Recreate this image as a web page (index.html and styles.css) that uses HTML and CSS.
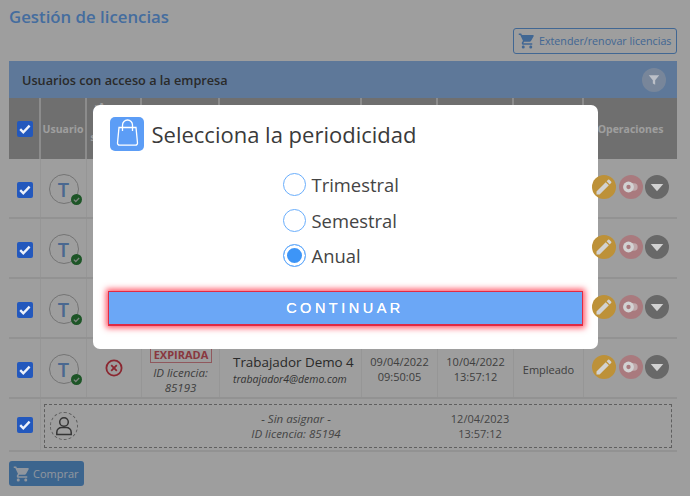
FILE: index.html
```html
<!DOCTYPE html>
<html lang="es">
<head>
<meta charset="utf-8">
<title>Gestión de licencias</title>
<link rel="stylesheet" href="styles.css">
</head>
<body>
<svg class="defs" width="0" height="0" aria-hidden="true">
  <symbol id="cart" viewBox="0 0 24 24"><path d="M17,18C15.89,18 15,18.89 15,20A2,2 0 0,0 17,22A2,2 0 0,0 19,20C19,18.89 18.1,18 17,18M1,2V4H3L6.6,11.59L5.24,14.04C5.09,14.32 5,14.65 5,15A2,2 0 0,0 7,17H19V15H7.42A0.25,0.25 0 0,1 7.17,14.75C7.17,14.7 7.18,14.66 7.2,14.63L8.1,13H15.55C16.3,13 16.96,12.58 17.3,11.97L20.88,5.5C20.95,5.34 21,5.17 21,5A1,1 0 0,0 20,4H5.21L4.27,2M7,18C5.89,18 5,18.89 5,20A2,2 0 0,0 7,22A2,2 0 0,0 9,20C9,18.89 8.1,18 7,18Z"/></symbol>
  <symbol id="pencil" viewBox="0 0 24 24"><path d="M20.71,7.04C21.1,6.65 21.1,6 20.71,5.63L18.37,3.29C18,2.9 17.35,2.9 16.96,3.29L15.12,5.12L18.87,8.87M3,17.25V21H6.75L17.81,9.93L14.06,6.18L3,17.25Z"/></symbol>
  <symbol id="toggle" viewBox="0 0 24 24"><rect x="9" y="7.5" width="11" height="9" rx="4.5" opacity=".55"/><circle cx="9" cy="12" r="6.5"/><circle cx="9" cy="12" r="2.6" fill="#a97a7e"/></symbol>
  <symbol id="caret" viewBox="0 0 24 24"><path d="M4.5 8.5h15L12 17z"/></symbol>
  <symbol id="check" viewBox="0 0 16 16"><path d="M3.2 8.2l3.1 3.1 6.3-6.6" fill="none" stroke="currentColor" stroke-width="2.4"/></symbol>
  <symbol id="okbadge" viewBox="0 0 12 12"><circle cx="6" cy="6" r="6" fill="#2f8a3f"/><path d="M3.1 6.1l2.1 2.1 3.7-3.9" fill="none" stroke="#c9d8cb" stroke-width="1.4"/></symbol>
</svg>

<main class="page">
  <h1 class="title">Gestión de licencias</h1>
  <div class="toolbar">
    <button class="btn-outline" type="button"><svg class="ico-cart"><use href="#cart"/></svg>Extender/renovar licencias</button>
  </div>

  <section class="panel">
    <header class="panel-head">
      <span>Usuarios con acceso a la empresa</span>
      <span class="filter"><svg viewBox="0 0 24 24" width="14" height="14"><path d="M3 4h18l-7 8.500V20l-4-2v-5.500z"/></svg></span>
    </header>

    <div class="row head">
      <div class="cell"><span class="chk"><svg><use href="#check"/></svg></span></div>
      <div class="cell">Usuario</div>
      <div class="cell narrow">¿Acceso a sistema?</div>
      <div class="cell"></div>
      <div class="cell"></div>
      <div class="cell"></div>
      <div class="cell"></div>
      <div class="cell"></div>
      <div class="cell">Operaciones</div>
    </div>

    <div class="row body">
      <div class="cell"><span class="chk"><svg><use href="#check"/></svg></span></div>
      <div class="cell"><span class="avatar">T<svg class="badge"><use href="#okbadge"/></svg></span></div>
      <div class="cell"></div><div class="cell"></div><div class="cell"></div><div class="cell"></div><div class="cell"></div><div class="cell"></div>
      <div class="cell ops">
        <span class="op edit"><svg><use href="#pencil"/></svg></span>
        <span class="op tog"><svg><use href="#toggle"/></svg></span>
        <span class="op more"><svg><use href="#caret"/></svg></span>
      </div>
    </div>

    <div class="row body">
      <div class="cell"><span class="chk"><svg><use href="#check"/></svg></span></div>
      <div class="cell"><span class="avatar">T<svg class="badge"><use href="#okbadge"/></svg></span></div>
      <div class="cell"></div><div class="cell"></div><div class="cell"></div><div class="cell"></div><div class="cell"></div><div class="cell"></div>
      <div class="cell ops">
        <span class="op edit"><svg><use href="#pencil"/></svg></span>
        <span class="op tog"><svg><use href="#toggle"/></svg></span>
        <span class="op more"><svg><use href="#caret"/></svg></span>
      </div>
    </div>

    <div class="row body">
      <div class="cell"><span class="chk"><svg><use href="#check"/></svg></span></div>
      <div class="cell"><span class="avatar">T<svg class="badge"><use href="#okbadge"/></svg></span></div>
      <div class="cell"></div><div class="cell"></div><div class="cell"></div><div class="cell"></div><div class="cell"></div><div class="cell"></div>
      <div class="cell ops">
        <span class="op edit"><svg><use href="#pencil"/></svg></span>
        <span class="op tog"><svg><use href="#toggle"/></svg></span>
        <span class="op more"><svg><use href="#caret"/></svg></span>
      </div>
    </div>

    <div class="row body">
      <div class="cell"><span class="chk"><svg><use href="#check"/></svg></span></div>
      <div class="cell"><span class="avatar">T<svg class="badge"><use href="#okbadge"/></svg></span></div>
      <div class="cell"><svg class="denied" viewBox="0 0 20 20"><circle cx="10" cy="10" r="7.6"/><path d="M7.200 7.200l5.600 5.600M12.800 7.200l-5.600 5.600"/></svg></div>
      <div class="cell lic">
        <span class="stamp">EXPIRADA</span>
        <em>ID licencia:<br>85193</em>
      </div>
      <div class="cell user">
        <span class="name">Trabajador Demo 4</span>
        <em class="mail">trabajador4@demo.com</em>
      </div>
      <div class="cell date">09/04/2022<br>09:50:05</div>
      <div class="cell date">10/04/2022<br>13:57:12</div>
      <div class="cell date">Empleado</div>
      <div class="cell ops">
        <span class="op edit"><svg><use href="#pencil"/></svg></span>
        <span class="op tog"><svg><use href="#toggle"/></svg></span>
        <span class="op more"><svg><use href="#caret"/></svg></span>
      </div>
    </div>

    <div class="row last">
      <div class="cell"><span class="chk"><svg><use href="#check"/></svg></span></div>
      <div class="slot">
        <span class="ghost"><svg viewBox="0 0 24 24"><circle cx="12" cy="8" r="4.300"/><path d="M4.800 20.500v-2.300c0-2.800 2.400-4.700 4.800-4.700h4.800c2.400 0 4.800 1.900 4.800 4.700v2.300z"/></svg></span>
        <em class="slot-text">- Sin asignar -<br>ID licencia: 85194</em>
        <span class="slot-date">12/04/2023<br>13:57:12</span>
      </div>
    </div>
  </section>

  <button class="btn-buy" type="button"><svg class="ico-cart"><use href="#cart"/></svg>Comprar</button>
</main>

<div class="overlay">
  <div class="modal">
    <div class="modal-head">
      <span class="bag"><svg viewBox="0 0 34 34"><path d="M9 10.500h17l1.500 15.500a2 2 0 0 1-2 2.200H9.500a2 2 0 0 1-2-2.200z"/><path d="M12.500 14V8a5 5 0 0 1 10 0v6"/></svg></span>
      <h2>Selecciona la periodicidad</h2>
    </div>
    <div class="options">
      <label class="opt"><span class="radio"></span>Trimestral</label>
      <label class="opt"><span class="radio"></span>Semestral</label>
      <label class="opt"><span class="radio on"></span>Anual</label>
    </div>
    <button class="continue" type="button">CONTINUAR</button>
  </div>
</div>
</body>
</html>
```
FILE: styles.css
```css
* { box-sizing: border-box; }
html, body { margin: 0; height: 100%; }
body {
  background: #fff;
  font-family: "Open Sans", "Noto Sans", sans-serif;
  color: #666;
  overflow: hidden;
}
.defs { display: block; height: 0; }
.page { padding: 6px 13px 0 9px; }
.title {
  margin: 0;
  height: 22px;
  line-height: 22px;
  font-size: 16.800px;
  font-weight: 600;
  color: #6fb0ff;
}
.toolbar { display: flex; justify-content: flex-end; height: 26px; margin-bottom: 7px; }
.ico-cart { width: 18px; height: 18px; fill: currentColor; flex: none; }
button { font-family: inherit; cursor: pointer; }
.btn-outline {
  display: flex;
  align-items: center;
  gap: 3px;
  width: 164px;
  height: 26px;
  padding: 0 0 0 4px;
  background: transparent;
  border: 1px solid #6aa6ee;
  border-radius: 3px;
  font-size: 10.700px;
  color: #6aa6ee;
  white-space: nowrap;
}
.panel-head {
  display: flex;
  align-items: center;
  justify-content: space-between;
  height: 37px;
  padding: 0 11px 0 13px;
  background: #98c2f7;
  font-size: 12.700px;
  font-weight: 600;
  color: #444;
}
.filter {
  display: flex;
  align-items: center;
  justify-content: center;
  width: 24px;
  height: 24px;
  border-radius: 50%;
  background: #c2d9f8;
}
.filter svg { position: relative; z-index: 5; fill: #bcc0c8; }
.row {
  display: grid;
  grid-template-columns: 32px 46px 55px 78px 142px 76px 76px 70px 93px;
}
.cell {
  display: flex;
  flex-direction: column;
  align-items: center;
  justify-content: center;
  text-align: center;
  border-right: 1px solid #f2f2f2;
}
.cell:last-child { border-right: 0; }
.head { height: 61px; background: #b3b3b3; }
.head .cell {
  color: #fff;
  font-size: 10.500px;
  font-weight: 700;
  border-right: 2px solid #e3e3e3;
}
.head .cell:last-child { border-right: 0; }
.head .narrow { justify-content: flex-start; padding: 2px 4px 0; line-height: 15px; }
.body { height: 60px; border-bottom: 2px solid #ececec; }
.last { height: 53px; border-bottom: 2px solid #ececec; grid-template-columns: 32px 1fr; }
.chk {
  position: relative;
  z-index: 5;
  display: block;
  width: 16px;
  height: 16px;
  margin-left: 1px;
  background: #2358bd;
  border-radius: 2px;
  color: #eef2fb;
}
.body .chk { margin-top: 3px; }
.chk svg { display: block; width: 16px; height: 16px; }
.avatar {
  position: relative;
  display: flex;
  align-items: center;
  justify-content: center;
  width: 30px;
  height: 30px;
  margin-top: 2px;
  border: 1px solid #bcbcbc;
  border-radius: 50%;
  background: #fff;
  font-size: 20px;
  font-weight: 600;
  color: #78a8e8;
}
.badge { position: absolute; right: -4px; bottom: -2px; width: 11px; height: 11px; }
.denied {
  width: 20px;
  height: 20px;
  fill: none;
  stroke: #e0404f;
  stroke-width: 1.800;
}
.ops { flex-direction: row; justify-content: flex-start; gap: 2.500px; padding: 0 0 2px 8px; }
.op {
  position: relative;
  z-index: 5;
  display: flex;
  align-items: center;
  justify-content: center;
  flex: none;
  width: 24px;
  height: 24px;
  border-radius: 50%;
}
.op svg {
  display: block;
  width: 20px;
  height: 20px;
  fill: #d2d2d2;
}
.edit { background: #bd9138; }
.tog { background: #a97a7e; }
.more { background: #686868; }
.lic { font-size: 11.500px; line-height: 15px; padding-top: 4px; }
.stamp {
  display: block;
  margin-left: 1px;
  margin-bottom: 2px;
  padding: 0 3px;
  border: 1px solid #e88f96;
  font-size: 11px;
  font-weight: 700;
  line-height: 15px;
  color: #dd5a66;
}
.user { align-items: flex-start; padding: 3px 0 0 13px; }
.name { font-size: 13.400px; line-height: 19px; color: #444; white-space: nowrap; }
.mail { font-size: 10.500px; line-height: 15px; white-space: nowrap; color: #555; }
.date { font-size: 11px; line-height: 15px; padding-top: 2px; color: #666; }
.slot {
  display: flex;
  align-items: center;
  height: 44px;
  margin: 5px 5px 0 3px;
  padding-left: 5px;
  border: 1px dashed #999;
  font-size: 11px;
  line-height: 15px;
  color: #707070;
  text-align: center;
}
.ghost {
  display: flex;
  align-items: center;
  justify-content: center;
  flex: none;
  width: 28px;
  height: 28px;
  border: 1px dashed #999;
  border-radius: 50%;
}
.ghost svg { width: 24px; height: 24px; fill: none; stroke: #555; stroke-width: 1.500; }
.slot-text { width: 150px; margin-left: 143px; flex: none; font-size: 11.500px; }
.slot-date { width: 90px; margin-left: 64px; flex: none; }
.btn-buy {
  display: flex;
  align-items: center;
  gap: 2px;
  width: 75px;
  height: 25px;
  margin-top: 9px;
  padding: 0 0 0 4px;
  border: 0;
  border-radius: 3px;
  background: #62a3e6;
  color: #e8f2ff;
  font-size: 11px;
}
.overlay {
  position: fixed;
  inset: 0;
  z-index: 4;
  display: flex;
  justify-content: center;
  align-items: flex-start;
  padding-top: 105px;
  background: rgba(0, 0, 0, .38);
}
.modal {
  width: 505px;
  height: 244px;
  padding: 12px 15px 0;
  background: #fff;
  border-radius: 7px;
}
.modal-head { display: flex; align-items: center; gap: 8px; padding-left: 2px; }
.bag {
  display: block;
  width: 34px;
  height: 34px;
  border-radius: 5px;
  background: #5c9df6;
}
.bag svg { display: block; width: 34px; height: 34px; fill: none; stroke: #fff; stroke-width: 1.300; }
.modal-head h2 { margin: 0; font-size: 22px; font-weight: 400; color: #3a3a3a; white-space: nowrap; }
.options {
  display: flex;
  flex-direction: column;
  gap: 12.500px;
  width: 130px;
  margin: 22px 0 0 175px;
}
.opt { display: flex; align-items: center; gap: 6px; height: 23px; font-size: 18.400px; color: #444; }
.radio {
  display: block;
  flex: none;
  width: 23px;
  height: 23px;
  border: 1px solid #6aaefc;
  border-radius: 50%;
  background: #fff;
}
.radio.on { background: #3d95f7; box-shadow: inset 0 0 0 3px #fff; }
.continue {
  display: block;
  width: 475px;
  height: 35px;
  margin-top: 24px;
  background: #6ba7f6;
  border: 1px solid #e02a44;
  border-bottom-width: 2px;
  box-shadow: 0 0 6px 2px rgba(255, 40, 60, .8);
  font-family: "Liberation Sans", Arial, sans-serif;
  font-size: 14.500px;
  letter-spacing: 3.500px;
  text-shadow: 0 0 .5px #fff;
  color: #fff;
}
```
